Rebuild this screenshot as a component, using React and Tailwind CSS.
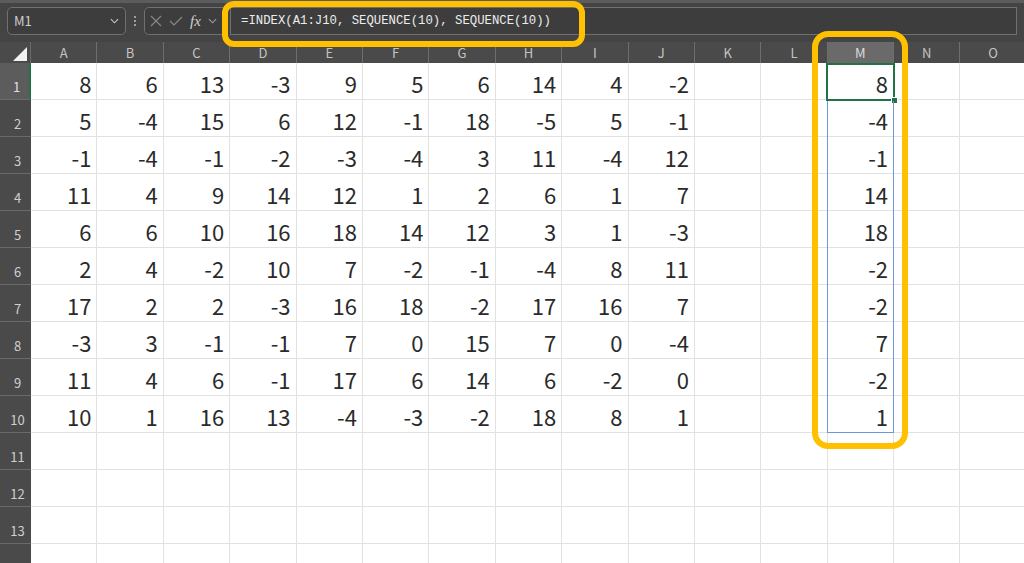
import React from 'react';

const cols = ['A', 'B', 'C', 'D', 'E', 'F', 'G', 'H', 'I', 'J', 'K', 'L', 'M', 'N', 'O'];

const data = [
    [8, 6, 13, -3, 9, 5, 6, 14, 4, -2],
    [5, -4, 15, 6, 12, -1, 18, -5, 5, -1],
    [-1, -4, -1, -2, -3, -4, 3, 11, -4, 12],
    [11, 4, 9, 14, 12, 1, 2, 6, 1, 7],
    [6, 6, 10, 16, 18, 14, 12, 3, 1, -3],
    [2, 4, -2, 10, 7, -2, -1, -4, 8, 11],
    [17, 2, 2, -3, 16, 18, -2, 17, 16, 7],
    [-3, 3, -1, -1, 7, 0, 15, 7, 0, -4],
    [11, 4, 6, -1, 17, 6, 14, 6, -2, 0],
    [10, 1, 16, 13, -4, -3, -2, 18, 8, 1],
];

// M = INDEX(A1:J10, SEQUENCE(10), SEQUENCE(10)) -> diagonal
const diag = data.map((row, i) => row[i]);

const FONT = { fontFamily: '"Noto Sans CJK JP", "Noto Sans", sans-serif' };

const Chevron = ({ className }) => (
    <svg viewBox="0 0 10 6" className={className} fill="none" stroke="currentColor" strokeWidth="1.2">
        <path d="M1 1l4 4 4-4" />
    </svg>
);

const FormulaBar = () => (
    <div className="h-[42px] bg-[#444444] border-t-[3px] border-[#5c5c5c] flex items-start pt-[4px] px-[7px] gap-[6px]">
        <div className="w-[119px] h-[28px] rounded-[5px] border border-[#707070] bg-[#3d3d3d] flex items-center justify-between px-[6px] text-[#cfcfcf] text-[13px]">
            <span>M1</span>
            <Chevron className="w-[9px] h-[6px] text-[#c8c8c8]" />
        </div>
        <div className="w-[6px] h-[28px] flex flex-col items-center justify-center gap-[2px]">
            <span className="w-[2px] h-[2px] bg-[#bdbdbd] rounded-full" />
            <span className="w-[2px] h-[2px] bg-[#bdbdbd] rounded-full" />
            <span className="w-[2px] h-[2px] bg-[#bdbdbd] rounded-full" />
        </div>
        <div className="w-[80px] h-[28px] rounded-l-[5px] border border-[#707070] bg-[#3d3d3d] flex items-center px-[5px] gap-[7px] text-[#8a8a8a]">
            <svg viewBox="0 0 12 12" className="w-[12px] h-[12px]" fill="none" stroke="currentColor" strokeWidth="1.1">
                <path d="M1 1l10 10M11 1L1 11" />
            </svg>
            <svg viewBox="0 0 14 12" className="w-[14px] h-[12px]" fill="none" stroke="currentColor" strokeWidth="1.1">
                <path d="M1 6l4 4 8-8" />
            </svg>
            <span className="text-[#d0d0d0] italic text-[15px] leading-none" style={{ fontFamily: '"Liberation Serif", serif' }}>fx</span>
            <Chevron className="w-[9px] h-[6px] text-[#a0a0a0]" />
        </div>
        <div className="flex-1 h-[28px] border border-[#707070] bg-[#3d3d3d] flex items-center pl-[10px] text-[#ececec] text-[12.3px]" style={{ fontFamily: '"Liberation Mono", "DejaVu Sans Mono", monospace' }}>
            =INDEX(A1:J10, SEQUENCE(10), SEQUENCE(10))
        </div>
    </div>
);

const HeaderRow = () => (
    <div className="grid grid-cols-[31px_repeat(15,66.4px)] h-[21px] bg-[#4a4a4a]">
        <div className="relative border-r border-[#6a6a6a]">
            <svg viewBox="0 0 14 14" className="absolute right-[3px] bottom-[2px] w-[14px] h-[14px]">
                <path d="M14 0V14H0Z" fill="#f2f2f2" />
            </svg>
        </div>
        {cols.map((c) => (
            <div
                key={c}
                className={
                    'flex items-center justify-center text-[13px] border-r border-[#6e6e6e] ' +
                    (c === 'M' ? 'bg-[#6a6a6a] text-[#dedede]' : 'text-[#c4c4c4]')
                }
            >
                {c}
            </div>
        ))}
    </div>
);

const Row = ({ n, values, showLabel = true }) => (
    <div className="grid grid-cols-[31px_repeat(15,66.4px)] h-[37px]">
        <div
            className={
                'flex items-end justify-center pl-[4px] pb-[3px] text-[13px] border-b border-[#6a6a6a] ' +
                (n === 1 ? 'bg-[#5c5c5c] text-[#e0e0e0] border-r-2 border-r-[#217346]' : 'bg-[#4a4a4a] text-[#cfcfcf]')
            }
        >
            {showLabel ? n : ''}
        </div>
        {cols.map((c, i) => {
            let v = '';
            if (values && i < 10) v = values[i];
            if (values && c === 'M') v = diag[n - 1];
            return (
                <div
                    key={c}
                    className="flex items-end justify-end pr-[5px] bg-white border-r border-b border-[#e2e2e2] text-[22px] leading-[32px] text-[#2a2a2a]"
                >
                    {v}
                </div>
            );
        })}
    </div>
);

export default function App() {
    return (
        <div className="relative w-[1024px] h-[563px] overflow-hidden bg-white" style={FONT}>
            <FormulaBar />
            <HeaderRow />
            {Array.from({ length: 14 }, (_, i) => (
                <Row key={i} n={i + 1} values={data[i]} showLabel={i < 13} />
            ))}

            {/* selection: M1 active cell, M2:M10 spill range */}
            <div className="absolute left-[826px] top-[63px] w-[69px] h-[38px] border-2 border-[#217346]" />
            <div className="absolute left-[891px] top-[97px] w-[7px] h-[7px] bg-[#217346] border border-white" />
            <div className="absolute left-[827px] top-[101px] w-[67px] h-[332px] border border-[#6f98dc] border-t-0" />

            {/* orange callouts */}
            <div className="absolute left-[222px] top-[1px] w-[363px] h-[46px] rounded-[12px] border-[6px] border-[#ffc000]" />
            <div className="absolute left-[812px] top-[31px] w-[96px] h-[418px] rounded-[16px] border-[6px] border-[#ffc000]" />
        </div>
    );
}
